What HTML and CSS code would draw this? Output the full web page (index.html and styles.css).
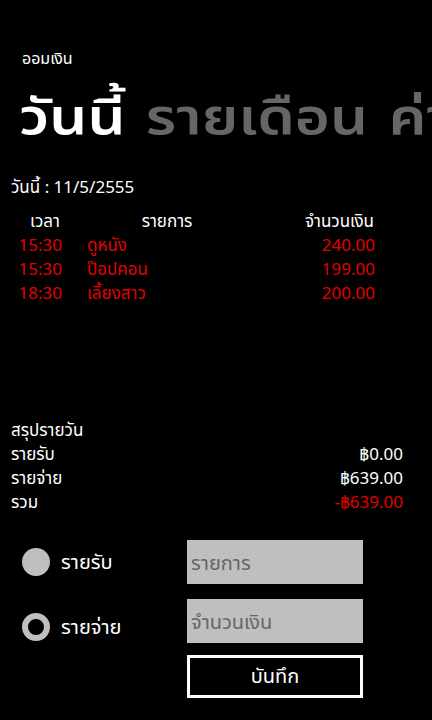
FILE: index.html
```html
<!DOCTYPE html>
<html lang="th">
<head>
  <meta charset="UTF-8" />
  <title>ออมเงิน</title>
  <link rel="stylesheet" href="styles.css">
</head>
<body>
  <div class="page">
    <div class="app-title">ออมเงิน</div>
    <div class="pivot">
      <span class="pivot-item active">วันนี้</span>
      <span class="pivot-item">รายเดือน</span>
      <span class="pivot-item">ค่าใช้จ่าย</span>
    </div>

    <div class="date">วันนี้ : 11/5/2555</div>

    <div class="table">
      <div class="row head">
        <span class="c-time">เวลา</span>
        <span class="c-name">รายการ</span>
        <span class="c-amount">จำนวนเงิน</span>
      </div>
      <div class="row item">
        <span class="c-time">15:30</span>
        <span class="c-name">ดูหนัง</span>
        <span class="c-amount">240.00</span>
      </div>
      <div class="row item">
        <span class="c-time">15:30</span>
        <span class="c-name">ป๊อปคอน</span>
        <span class="c-amount">199.00</span>
      </div>
      <div class="row item">
        <span class="c-time">18:30</span>
        <span class="c-name">เลี้ยงสาว</span>
        <span class="c-amount">200.00</span>
      </div>
    </div>

    <div class="summary">
      <div class="sum-title">สรุปรายวัน</div>
      <div class="sum-row"><span>รายรับ</span><span>฿0.00</span></div>
      <div class="sum-row"><span>รายจ่าย</span><span>฿639.00</span></div>
      <div class="sum-row"><span>รวม</span><span class="neg">-฿639.00</span></div>
    </div>

    <div class="form">
      <div class="radios">
        <label class="radio"><span class="dot"></span>รายรับ</label>
        <label class="radio checked"><span class="dot"></span>รายจ่าย</label>
      </div>
      <div class="fields">
        <input type="text" placeholder="รายการ" />
        <input type="text" placeholder="จำนวนเงิน" />
        <button>บันทึก</button>
      </div>
    </div>
  </div>
</body>
</html>
```

FILE: styles.css
```css
html, body {
  margin: 0;
  padding: 0;
  background: #000;
  height: 100%;
}

body {
  color: #fff;
  font-family: "Noto Sans", "Noto Sans Thai", Tahoma, sans-serif;
  overflow: hidden;
}

.page {
  width: 432px;
  height: 720px;
  overflow: hidden;
}

.app-title {
  margin: 46px 0 0 22px;
  font-size: 16px;
  line-height: 24px;
}

.pivot {
  white-space: nowrap;
  margin: 17px 0 0 19px;
  font-size: 50px;
  line-height: 56px;
  font-weight: 600;
  transform: scaleX(1.2);
  transform-origin: left center;
}

.pivot-item {
  color: #666;
  margin-right: 4px;
}

.pivot-item.active {
  color: #fff;
}

.date {
  margin: 32px 0 0 11px;
  font-size: 17px;
  line-height: 24px;
}

.table {
  margin-top: 10px;
}

.row {
  display: flex;
  font-size: 17px;
  line-height: 24px;
}

.row .c-time {
  width: 62px;
  text-align: right;
}

.row .c-name {
  width: 120px;
  margin-left: 25px;
}

.row .c-amount {
  width: 168px;
  text-align: right;
}

.row.head .c-time {
  width: 62px;
  text-align: center;
  padding-left: 28px;
  box-sizing: border-box;
}

.row.head .c-name {
  margin-left: 0;
  width: 210px;
  text-align: center;
}

.row.head .c-amount {
  width: 102px;
  text-align: right;
}

.row.item {
  color: #e50000;
}

.summary {
  margin: 113px 0 0 11px;
  width: 392px;
  font-size: 17px;
  line-height: 24px;
}

.sum-row {
  display: flex;
  justify-content: space-between;
}

.neg {
  color: #e50000;
}

.form {
  display: flex;
  margin-top: 26px;
}

.radios {
  width: 187px;
  display: flex;
  flex-direction: column;
  gap: 37px;
  padding-top: 8px;
}

.radio {
  display: flex;
  align-items: center;
  margin-left: 22px;
  font-size: 20px;
  line-height: 28px;
  gap: 11px;
}

.dot {
  width: 28px;
  height: 28px;
  border-radius: 50%;
  background: #bfbfbf;
  box-sizing: border-box;
}

.radio.checked .dot {
  background: #000;
  border: 6px solid #bfbfbf;
}

.fields {
  display: flex;
  flex-direction: column;
  width: 176px;
}

input {
  height: 44px;
  border: none;
  background: #bfbfbf;
  padding: 0 4px;
  font-family: inherit;
  font-size: 20px;
  color: #000;
  box-sizing: border-box;
  margin-bottom: 15px;
}

input::placeholder {
  color: #666;
}

button {
  height: 43px;
  margin-top: -3px;
  background: #000;
  border: 3px solid #fff;
  color: #fff;
  font-family: inherit;
  font-size: 20px;
  cursor: pointer;
}
```
